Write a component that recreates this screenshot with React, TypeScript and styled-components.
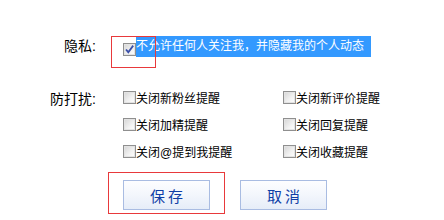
import React from 'react';
import styled, { createGlobalStyle } from 'styled-components';

const GlobalStyle = createGlobalStyle`
  html, body {
    margin: 0;
    padding: 0;
    background: #ffffff;
  }
  body {
    font-family: "Liberation Sans", "Noto Sans CJK SC", sans-serif;
    color: #000000;
  }
`;

const Form = styled.div`
  width: 444px;
  height: 220px;
  padding-top: 36px;
  box-sizing: border-box;
`;

const Row = styled.div<{ $top?: number }>`
  display: grid;
  grid-template-columns: 96px 1fr;
  column-gap: 27px;
  margin-top: ${(p) => p.$top ?? 0}px;
`;

const Label = styled.div<{ $pad?: number }>`
  text-align: right;
  font-size: 14px;
  line-height: 17px;
  padding-top: ${(p) => p.$pad ?? 0}px;
  white-space: nowrap;
`;

const Cell = styled.div`
  position: relative;
  display: flex;
  align-items: flex-end;
`;

const Box = styled.span`
  display: inline-flex;
  align-items: center;
  justify-content: center;
  flex: none;
  width: 13px;
  height: 13px;
  box-sizing: border-box;
  border: 1px solid #8f8f8f;
  background: linear-gradient(135deg, #d4d4d4 0%, #f2f2f2 60%, #ffffff 100%);
  box-shadow: inset 0 0 0 1px #e3e3e3;
`;

const Selected = styled.span`
  display: inline-block;
  height: 21px;
  line-height: 21px;
  font-size: 12px;
  padding-right: 7px;
  background: #3399ff;
  color: #ffffff;
  white-space: nowrap;
`;

const Mark = styled.div<{ $l: number; $t: number; $w: number; $h: number }>`
  position: absolute;
  left: ${(p) => p.$l}px;
  top: ${(p) => p.$t}px;
  width: ${(p) => p.$w}px;
  height: ${(p) => p.$h}px;
  box-sizing: border-box;
  border: 1px solid #e8393b;
  pointer-events: none;
`;

const Options = styled.div`
  display: grid;
  grid-template-columns: 160px 160px;
  row-gap: 10px;
`;

const Option = styled.label`
  display: flex;
  align-items: center;
  height: 17px;
  font-size: 12px;
  white-space: nowrap;
`;

const Buttons = styled.div`
  display: flex;
  gap: 30px;
  margin-top: 20px;
  padding-left: 123px;
`;

const BtnWrap = styled.div`
  position: relative;
`;

const Button = styled.button`
  width: 87px;
  height: 30px;
  box-sizing: border-box;
  border: 1px solid #a9bce2;
  background: linear-gradient(#fdfdff 0%, #f3f6fc 50%, #e6edf8 100%);
  color: #0f3ea6;
  font-family: "Noto Sans CJK SC", sans-serif;
  font-size: 15px;
  letter-spacing: 3px;
  text-indent: 3px;
  padding: 0;
  cursor: pointer;
`;

const Check = () => (
  <svg width="11" height="11" viewBox="0 0 11 11">
    <path d="M2 5.5 L4.3 8.2 L9.2 1.6" fill="none" stroke="#3a4fa8" strokeWidth="1.8" />
  </svg>
);

const left = ['关闭新粉丝提醒', '关闭加精提醒', '关闭@提到我提醒'];
const right = ['关闭新评价提醒', '关闭回复提醒', '关闭收藏提醒'];

export default function App() {
  const items: string[] = [];
  left.forEach((l, i) => items.push(l, right[i]));
  return (
    <>
      <GlobalStyle />
      <Form>
        <Row>
          <Label $pad={2}>隐私:</Label>
          <Cell>
            <Box style={{ marginBottom: 1 }}>
              <Check />
            </Box>
            <Selected>不允许任何人关注我，并隐藏我的个人动态</Selected>
            <Mark $l={-12} $t={0} $w={45} $h={32} />
          </Cell>
        </Row>
        <Row $top={32}>
          <Label $pad={2}>防打扰:</Label>
          <Options>
            {items.map((t) => (
              <Option key={t}>
                <Box />
                {t}
              </Option>
            ))}
          </Options>
        </Row>
        <Buttons>
          <BtnWrap>
            <Button>保存</Button>
            <Mark $l={-15} $t={-8} $w={117} $h={42} />
          </BtnWrap>
          <BtnWrap>
            <Button>取消</Button>
          </BtnWrap>
        </Buttons>
      </Form>
    </>
  );
}
